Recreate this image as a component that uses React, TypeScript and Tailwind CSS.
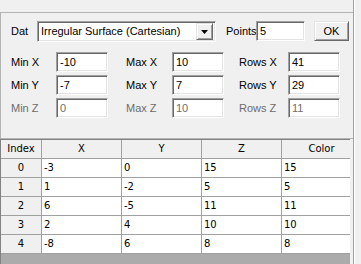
import React from "react";

const sunken =
  "border border-t-[#a0a0a0] border-l-[#a0a0a0] border-r-white border-b-white shadow-[inset_1px_1px_0_#696969,inset_-1px_-1px_0_#e3e3e3]";
const raised =
  "border border-t-[#e3e3e3] border-l-[#e3e3e3] border-r-[#696969] border-b-[#696969] shadow-[inset_1px_1px_0_#ffffff,inset_-1px_-1px_0_#a0a0a0] bg-[#f0f0f0]";

const Field = ({ value, disabled, w = "w-[52px]" }: { value: string; disabled?: boolean; w?: string }) => (
  <div
    className={`${w} h-[20px] shrink-0 flex items-center pl-[3px] ${sunken} ${
      disabled ? "bg-white text-[#6d6d6d]" : "bg-white text-black"
    }`}
  >
    {value}
  </div>
);

const Label = ({ text, w, disabled }: { text: string; w: string; disabled?: boolean }) => (
  <span className={`${w} shrink-0 whitespace-nowrap ${disabled ? "text-[#6d6d6d]" : "text-black"}`}>{text}</span>
);

const ranges = [
  { axis: "X", min: "-10", max: "10", rows: "41", disabled: false },
  { axis: "Y", min: "-7", max: "7", rows: "29", disabled: false },
  { axis: "Z", min: "0", max: "10", rows: "11", disabled: true },
];

const points = [
  [0, -3, 0, 15, 15],
  [1, 1, -2, 5, 5],
  [2, 6, -5, 11, 11],
  [3, 2, 4, 10, 10],
  [4, -8, 6, 8, 8],
];

const headers = ["X", "Y", "Z", "Color"];

export default function App() {
  return (
    <div
      className="w-[361px] h-[264px] bg-[#f0f0f0] flex overflow-hidden text-[11px] leading-none"
      style={{ fontFamily: '"Liberation Sans", Arial, sans-serif' }}
    >
      {/* left pane */}
      <div className="w-[354px] shrink-0 flex flex-col border-r border-[#a0a0a0] pt-[12px]">
        {/* settings group */}
        <div className="h-[127px] shrink-0 border-t border-b border-l border-[#b4b4b4] pt-[8px] pl-[10px] flex flex-col">
          <div className="flex items-start h-[21px]">
            <div className="w-[26px] h-[21px] flex items-center">Dat</div>
            <div className={`w-[179px] h-[21px] bg-white flex items-center justify-between pl-[3px] pr-[2px] ${sunken}`}>
              <span className="whitespace-nowrap">Irregular Surface (Cartesian)</span>
              <div className={`w-[17px] h-[17px] flex items-center justify-center ${raised}`}>
                <svg width="7" height="4" viewBox="0 0 7 4">
                  <path d="M0 0h7L3.5 4z" fill="#000" />
                </svg>
              </div>
            </div>
            <div className="w-[30px] ml-[10px] h-[20px] flex items-center whitespace-nowrap">Points</div>
            <Field value="5" w="w-[49px]" />
            <button className={`ml-[9px] w-[35px] h-[20px] flex items-center justify-center text-black ${raised}`}>
              OK
            </button>
          </div>

          <div className="flex flex-col gap-[3px] mt-[10px]">
            {ranges.map((r) => (
              <div key={r.axis} className="flex items-center h-[20px]">
                <Label text={`Min ${r.axis}`} w="w-[45px]" disabled={r.disabled} />
                <Field value={r.min} disabled={r.disabled} />
                <Label text={`Max ${r.axis}`} w="w-[46px] ml-[18px]" disabled={r.disabled} />
                <Field value={r.max} disabled={r.disabled} />
                <Label text={`Rows ${r.axis}`} w="w-[49px] ml-[15px]" disabled={r.disabled} />
                <Field value={r.rows} disabled={r.disabled} />
              </div>
            ))}
          </div>
        </div>

        {/* data grid */}
        <div
          className="w-[350px] flex-1 flex flex-col overflow-hidden border-t border-l border-[#828282] bg-[#ababab] text-[10px] text-black"
          style={{ fontFamily: '"DejaVu Sans", Tahoma, sans-serif' }}
        >
          <div className="flex h-[19px] shrink-0 bg-[#f0f0f0] border-b border-[#a0a0a0]">
            <div className="w-[41px] shrink-0 border-r border-[#a0a0a0] flex items-center justify-center">Index</div>
            {headers.map((h) => (
              <div key={h} className="w-[80px] shrink-0 border-r border-[#a0a0a0] flex items-center justify-center">
                {h}
              </div>
            ))}
          </div>
          {points.map((p) => (
            <div key={p[0]} className="flex h-[19px] shrink-0 border-b border-[#a0a0a0]">
              <div className="w-[41px] shrink-0 bg-[#f0f0f0] border-r border-[#a0a0a0] flex items-center justify-center">
                {p[0]}
              </div>
              {p.slice(1).map((v, i) => (
                <div key={i} className="w-[80px] shrink-0 bg-white border-r border-[#a0a0a0] flex items-center pl-[2px]">
                  {v}
                </div>
              ))}
            </div>
          ))}
        </div>
      </div>
      <div className="flex-1 border-l border-white" />
    </div>
  );
}
